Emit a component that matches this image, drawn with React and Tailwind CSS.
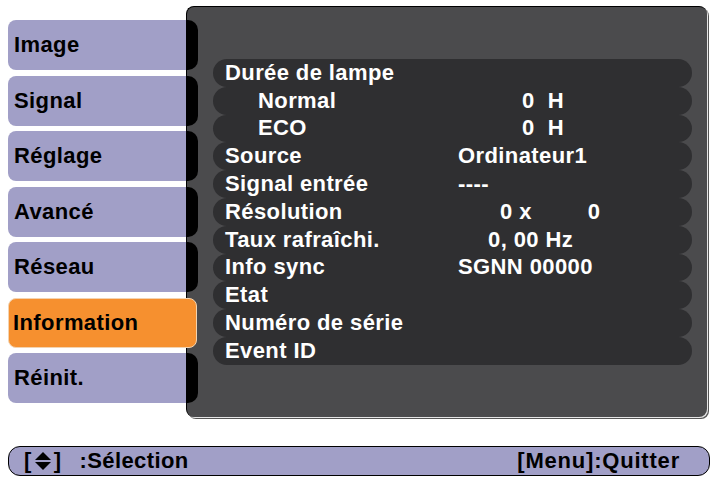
import React from 'react';

const TABS = [
  { label: 'Image' },
  { label: 'Signal' },
  { label: 'Réglage' },
  { label: 'Avancé' },
  { label: 'Réseau' },
  { label: 'Information', active: true },
  { label: 'Réinit.' },
];

const ROWS = [
  { label: 'Durée de lampe' },
  { label: 'Normal', indent: true, value: '0  H', pad: 'pl-[64px]' },
  { label: 'ECO', indent: true, value: '0  H', pad: 'pl-[64px]' },
  { label: 'Source', value: 'Ordinateur1', pad: 'pl-0' },
  { label: 'Signal entrée', value: '----', pad: 'pl-0' },
  { label: 'Résolution', res: true },
  { label: 'Taux rafraîchi.', value: '0, 00 Hz', pad: 'pl-[30px]' },
  { label: 'Info sync', value: 'SGNN 00000', pad: 'pl-0' },
  { label: 'Etat' },
  { label: 'Numéro de série' },
  { label: 'Event ID' },
];

function Tab({ label, active }) {
  if (active) {
    return (
      <div className="flex h-[50px] w-[189px] items-center rounded-[8px] border border-[#f3d3b0] bg-[#f6902f] pl-[4px] text-black">
        {label}
      </div>
    );
  }
  return (
    <div className="flex h-[50px] w-[190px]">
      <div className="flex w-[178px] items-center rounded-l-[8px] bg-[#a19fc7] pl-[6px] text-black">
        {label}
      </div>
      <div className="w-[12px] rounded-r-[10px] bg-black" />
    </div>
  );
}

function Row({ label, indent, value, pad, res }) {
  return (
    <div className="flex h-[27.8px] items-center rounded-full bg-[#2f2f31] text-white">
      <div className={`w-[245px] whitespace-nowrap ${indent ? 'pl-[45px]' : 'pl-[12px]'}`}>{label}</div>
      {res ? (
        <div className="flex whitespace-pre pl-[42px]">
          <span>0 x</span>
          <span className="pl-[56px]">0</span>
        </div>
      ) : (
        value && <div className={`whitespace-pre ${pad}`}>{value}</div>
      )}
    </div>
  );
}

export default function App() {
  return (
    <div
      className="h-[479px] w-[715px] overflow-hidden bg-white text-[22px] font-bold leading-none tracking-[0.4px]"
      style={{ fontFamily: '"Liberation Sans", Arial, sans-serif' }}
    >
      <div className="flex pt-[6px]">
        {/* Tabs */}
        <div className="relative z-10 flex w-[186px] flex-col gap-[5.5px] pl-[8px] pt-[14px]">
          {TABS.map(t => (
            <Tab key={t.label} {...t} />
          ))}
        </div>

        {/* Info panel */}
        <div className="h-[411px] w-[521px] rounded-[8px] border-l border-t border-black bg-[#4b4b4d] pl-[26px] pt-[52px] shadow-[1px_1px_0_#e6e6e6,2px_2px_0_#555]">
          <div className="flex w-[479px] flex-col">
            {ROWS.map(r => (
              <Row key={r.label} {...r} />
            ))}
          </div>
        </div>
      </div>

      {/* Bottom help bar */}
      <div className="ml-[8px] mt-[29px] flex h-[30px] w-[702px] items-center justify-between rounded-[12px] border-[1.5px] border-black bg-[#a19fc7] pl-[15px] pr-[29px] text-black">
        <div className="flex items-center">
          <span>[</span>
          <svg width="16" height="18" viewBox="0 0 16 18" className="mx-[3px] shrink-0">
            <path d="M8 0 L16 8 H0 Z" fill="black" />
            <path d="M0 10 H16 L8 18 Z" fill="black" />
          </svg>
          <span>]</span>
          <span className="pl-[18px]">:Sélection</span>
        </div>
        <span className="tracking-[0.8px]">[Menu]:Quitter</span>
      </div>
    </div>
  );
}
